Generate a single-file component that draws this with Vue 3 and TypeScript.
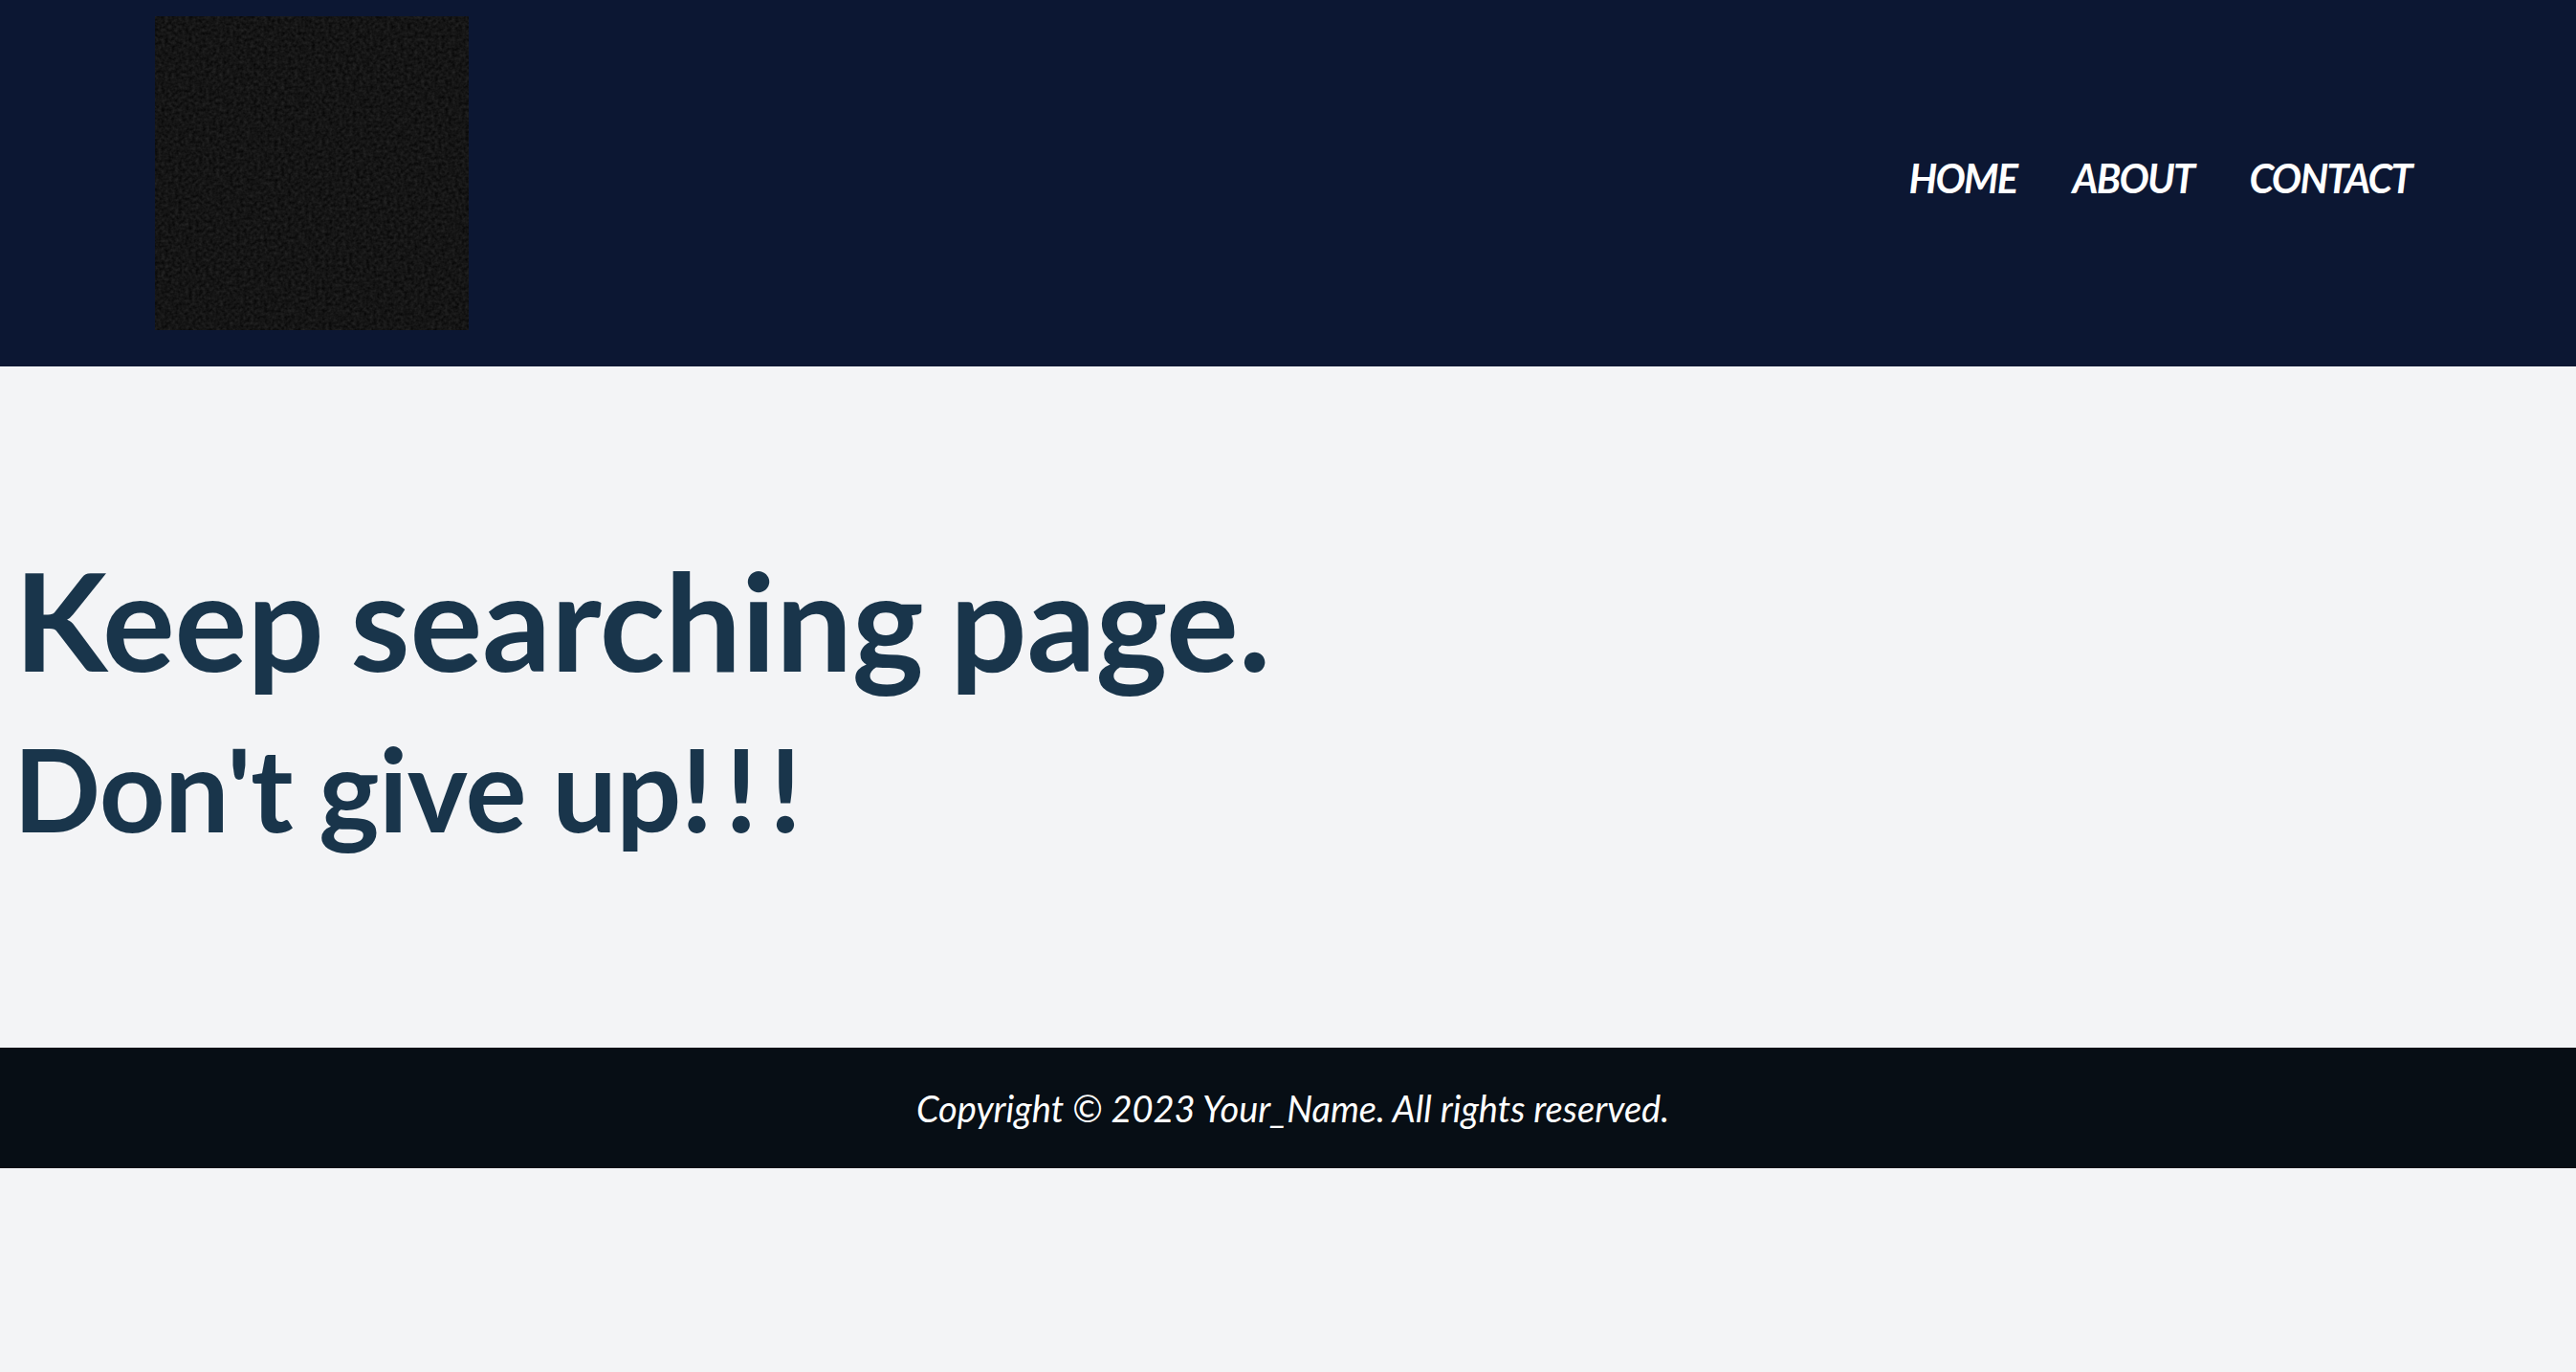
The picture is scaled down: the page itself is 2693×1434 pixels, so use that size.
<script setup lang="ts">
const links = ['HOME', 'ABOUT', 'CONTACT']
</script>

<template>
  <div class="page">
    <header class="site-header">
      <svg class="logo" width="328" height="328" viewBox="0 0 328 328" aria-hidden="true">
        <filter id="weave" x="0" y="0" width="100%" height="100%" color-interpolation-filters="sRGB">
          <feTurbulence type="fractalNoise" baseFrequency="0.28 0.3" numOctaves="2" seed="4" />
          <feColorMatrix values="0.15 0 0 0 0.007  0.15 0 0 0 0.007  0.15 0 0 0 0.007  0 0 0 0 1" />
        </filter>
        <rect width="328" height="328" filter="url(#weave)" />
      </svg>
      <nav class="site-nav">
        <a v-for="link in links" :key="link" href="#">{{ link }}</a>
      </nav>
    </header>
    <main class="content">
      <h1>Keep searching page.</h1>
      <h2>Don't give up<span class="bangs">!!!</span></h2>
    </main>
    <footer class="site-footer">
      <p>Copyright © 2023 Your_Name. All rights reserved.</p>
    </footer>
  </div>
</template>

<style>
html,
body {
  margin: 0;
  background: #f3f4f6;
}
</style>

<style scoped>
.page {
  font-family: Lato, "Liberation Sans", sans-serif;
}

.site-header {
  display: flex;
  justify-content: space-between;
  height: 383px;
  padding: 17px 172px 0 162px;
  box-sizing: border-box;
  background: #0c1733;
}

.logo {
  display: block;
}

.site-nav {
  display: flex;
  gap: 58px;
  padding-top: 145px;
}

.site-nav a {
  color: #fff;
  font-size: 41.5px;
  font-style: italic;
  font-weight: 700;
  letter-spacing: -1.7px;
  line-height: 48px;
  text-decoration: none;
}

.content {
  height: 712px;
  padding: 176px 15px 0;
  box-sizing: border-box;
  color: #19354b;
}

.content h1 {
  margin: 0;
  font-size: 142px;
  font-weight: 700;
  letter-spacing: -0.15px;
  word-spacing: -7px;
  line-height: 176px;
}

.content h2 {
  margin: 14px 0 0 -1px;
  font-size: 120px;
  font-weight: 700;
  letter-spacing: -0.7px;
  word-spacing: -1px;
  line-height: 150px;
}

.bangs {
  letter-spacing: 12.5px;
}

.site-footer {
  display: flex;
  justify-content: center;
  align-items: center;
  height: 126px;
  padding-left: 10px;
  background: #070e15;
  color: #fff;
}

.site-footer p {
  margin: 0;
  font-size: 38px;
  font-style: italic;
}
</style>
